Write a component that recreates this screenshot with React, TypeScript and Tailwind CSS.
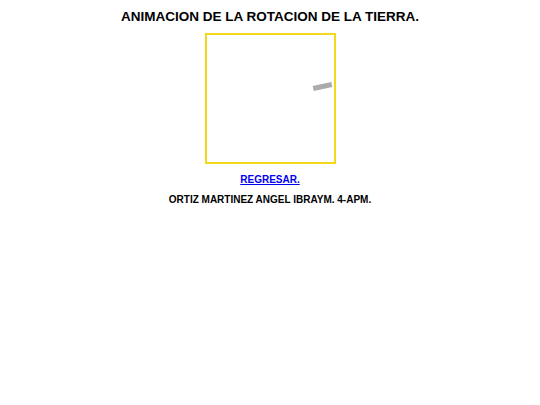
export default function App() {
  return (
    <div className="min-h-[405px] w-full bg-white font-['Liberation_Sans',Arial,sans-serif] text-black">
      <div className="flex flex-col items-center pt-[8px]">
        <h1 className="text-[13.5px] font-bold leading-[17px]">ANIMACION DE LA ROTACION DE LA TIERRA.</h1>
        <div className="mt-[8px] flex h-[131px] w-[131px] items-start justify-end border-2 border-[#f3d81c] bg-white">
          <div className="mr-[2px] mt-[49px] h-[5px] w-[19px] -rotate-[12deg] bg-[#ababab]" />
        </div>
        <a href="#" className="mt-[9px] text-[10px] font-bold leading-[13px] text-[#0000ee] underline">REGRESAR.</a>
        <p className="mt-[7px] text-[10px] font-bold leading-[13px]">ORTIZ MARTINEZ ANGEL IBRAYM. 4-APM.</p>
      </div>
    </div>
  );
}
